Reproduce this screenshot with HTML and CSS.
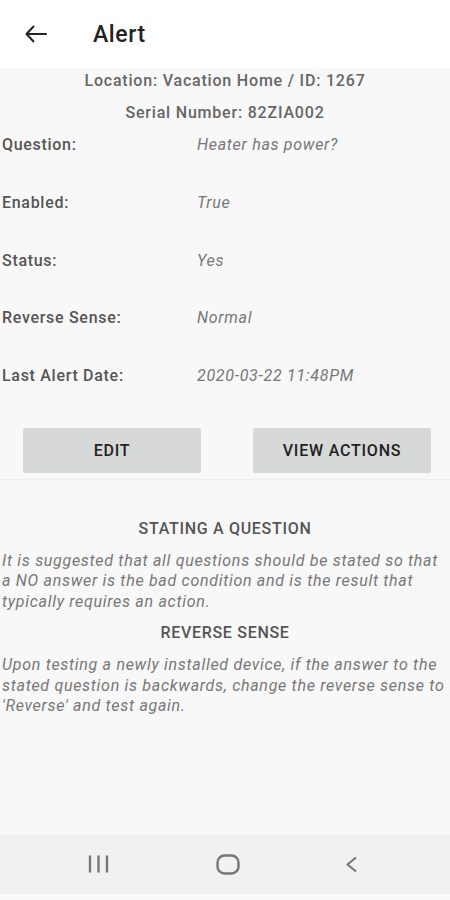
FILE: index.html
```html
<!DOCTYPE html>
<html lang="en">
<head>
  <meta charset="UTF-8" />
  <meta name="viewport" content="width=device-width, initial-scale=1.0"/>
  <title>Alert</title>
  <link rel="stylesheet" href="styles.css">
</head>
<body>
  <header class="appbar">
    <svg class="back" width="22" height="18" viewBox="0 0 22 18">
      <path d="M8.5 1.5L1.5 9l7 7.5M1.5 9H21" fill="none" stroke="#222" stroke-width="2" stroke-linecap="round" stroke-linejoin="round"/>
    </svg>
    <h1>Alert</h1>
  </header>

  <main class="content">
    <div class="info">
      <p>Location: Vacation Home / ID: 1267</p>
      <p>Serial Number: 82ZIA002</p>
    </div>

    <div class="details">
      <div class="row"><span class="label">Question:</span><span class="value">Heater has power?</span></div>
      <div class="row"><span class="label">Enabled:</span><span class="value">True</span></div>
      <div class="row"><span class="label">Status:</span><span class="value">Yes</span></div>
      <div class="row"><span class="label">Reverse Sense:</span><span class="value">Normal</span></div>
      <div class="row"><span class="label">Last Alert Date:</span><span class="value">2020-03-22 11:48PM</span></div>
    </div>

    <div class="actions">
      <button>Edit</button>
      <button>View Actions</button>
    </div>

    <section class="help">
      <h2>Stating a Question</h2>
      <p>It is suggested that all questions should be stated so that a NO answer is the bad condition and is the result that typically requires an action.</p>
      <h2>Reverse Sense</h2>
      <p>Upon testing a newly installed device, if the answer to the stated question is backwards, change the reverse sense to 'Reverse' and test again.</p>
    </section>
  </main>

  <nav class="sysbar">
    <svg width="22" height="20" viewBox="0 0 22 20">
      <path d="M2 1.5v17M10.5 1.5v17M19 1.5v17" stroke="#777" stroke-width="2.4"/>
    </svg>
    <svg width="24" height="21" viewBox="0 0 24 21">
      <rect x="1.5" y="1.5" width="21" height="18" rx="7" fill="none" stroke="#777" stroke-width="2.4"/>
    </svg>
    <svg width="13" height="17" viewBox="0 0 13 17">
      <path d="M11 1.5L2.5 8.5 11 15.5" fill="none" stroke="#777" stroke-width="2.2" stroke-linejoin="round"/>
    </svg>
  </nav>
</body>
</html>
```

FILE: styles.css
```css
html, body {
  margin: 0;
  height: 100%;
}
body {
  display: flex;
  flex-direction: column;
  height: 900px;
  font-family: Roboto, "Liberation Sans", sans-serif;
  font-size: 16px;
  letter-spacing: 0.7px;
  background: #fafafa;
}
p, h1, h2 {
  margin: 0;
}
.appbar {
  height: 68px;
  flex: none;
  display: flex;
  align-items: center;
  background: #fff;
}
.back {
  margin-left: 25px;
}
.appbar h1 {
  margin-left: 46px;
  font-size: 23px;
  font-weight: 500;
  letter-spacing: 0.6px;
  color: #222;
}
.content {
  flex: 1;
  background: #f8f8f8;
}
.info {
  display: flex;
  flex-direction: column;
  gap: 6px;
  text-align: center;
  font-weight: 500;
  letter-spacing: 0.8px;
  color: #666;
}
.info p {
  line-height: 26px;
}
.details {
  margin-top: 9px;
}
.row {
  display: flex;
  height: 57.75px;
  line-height: 20px;
}
.label {
  width: 195px;
  padding-left: 2px;
  font-weight: 500;
  color: #555;
}
.value {
  font-style: italic;
  color: #777;
}
.actions {
  display: flex;
  gap: 52px;
  padding: 4px 19px 0 23px;
  height: 51px;
  border-bottom: 1px solid #ececec;
}
.actions button {
  flex: 1;
  height: 45px;
  border: none;
  border-radius: 2px;
  background: #d7d8d8;
  font-family: inherit;
  font-size: 16px;
  font-weight: 500;
  letter-spacing: 0.8px;
  text-transform: uppercase;
  color: #222;
}
.help {
  padding-top: 39px;
}
.help h2 {
  text-align: center;
  font-size: 16px;
  font-weight: 500;
  line-height: 20px;
  text-transform: uppercase;
  color: #555;
  margin-bottom: 12px;
}
.help p {
  padding-left: 2px;
  font-style: italic;
  line-height: 20.5px;
  color: #777;
  margin-bottom: 11px;
}
.sysbar {
  flex: none;
  height: 60px;
  margin-bottom: 6px;
  display: flex;
  align-items: center;
  justify-content: space-between;
  padding: 0 92px 0 88px;
  background: #f1f1f1;
}
```
